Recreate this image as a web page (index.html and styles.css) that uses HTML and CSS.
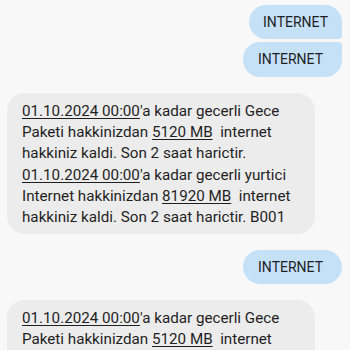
FILE: index.html
```html
<!DOCTYPE html>
<html>
<head>
<meta charset="utf-8">
<link rel="stylesheet" href="styles.css">
</head>
<body>
<div class="thread">
  <div class="sent sent-first">INTERNET</div>
  <div class="sent sent-last tight">INTERNET</div>
  <div class="received"><span class="link">01.10.2024 00:00</span>'a kadar gecerli Gece<br>Paketi hakkinizdan <span class="link">5120 MB</span>&nbsp; internet<br>hakkiniz kaldi. Son 2 saat harictir.<br><span class="link">01.10.2024 00:00</span>'a kadar gecerli yurtici<br>Internet hakkinizdan <span class="link">81920 MB</span>&nbsp; internet<br>hakkiniz kaldi. Son 2 saat harictir. B001</div>
  <div class="sent sent-single">INTERNET</div>
  <div class="received"><span class="link">01.10.2024 00:00</span>'a kadar gecerli Gece<br>Paketi hakkinizdan <span class="link">5120 MB</span>&nbsp; internet<br>hakkiniz kaldi. Son 2 saat harictir.</div>
</div>
</body>
</html>
```
FILE: styles.css
```css
html, body {
  margin: 0;
  padding: 0;
  background: #f8f8f8;
}
body {
  font-family: Roboto, "Noto Sans", sans-serif;
  color: #1f1f1f;
}
.thread {
  display: flex;
  flex-direction: column;
  padding: 5px 8px 0 7px;
}
.sent {
  align-self: flex-end;
  background: #c5e1f8;
  font-size: 14px;
  height: 34px;
  line-height: 34px;
  padding: 0 15px 0 15px;
  border-radius: 17px;
  box-sizing: border-box;
  margin-bottom: 16px;
}
.sent-first {
  border-bottom-right-radius: 4px;
  margin-bottom: 3px;
  padding: 0 14px 0 14px;
}
.sent-last {
  border-top-right-radius: 4px;
  height: 35px;
  line-height: 35px;
}
.tight, .sent-single {
  padding: 0 19px 0 15px;
}
.received {
  align-self: flex-start;
  box-sizing: border-box;
  width: 308px;
  background: #ececec;
  border-radius: 18px;
  font-size: 15.2px;
  line-height: 21.2px;
  padding: 8px 10px 6px 15px;
  margin-bottom: 16px;
}
.link {
  text-decoration: underline;
  text-underline-offset: 2px;
}
```
